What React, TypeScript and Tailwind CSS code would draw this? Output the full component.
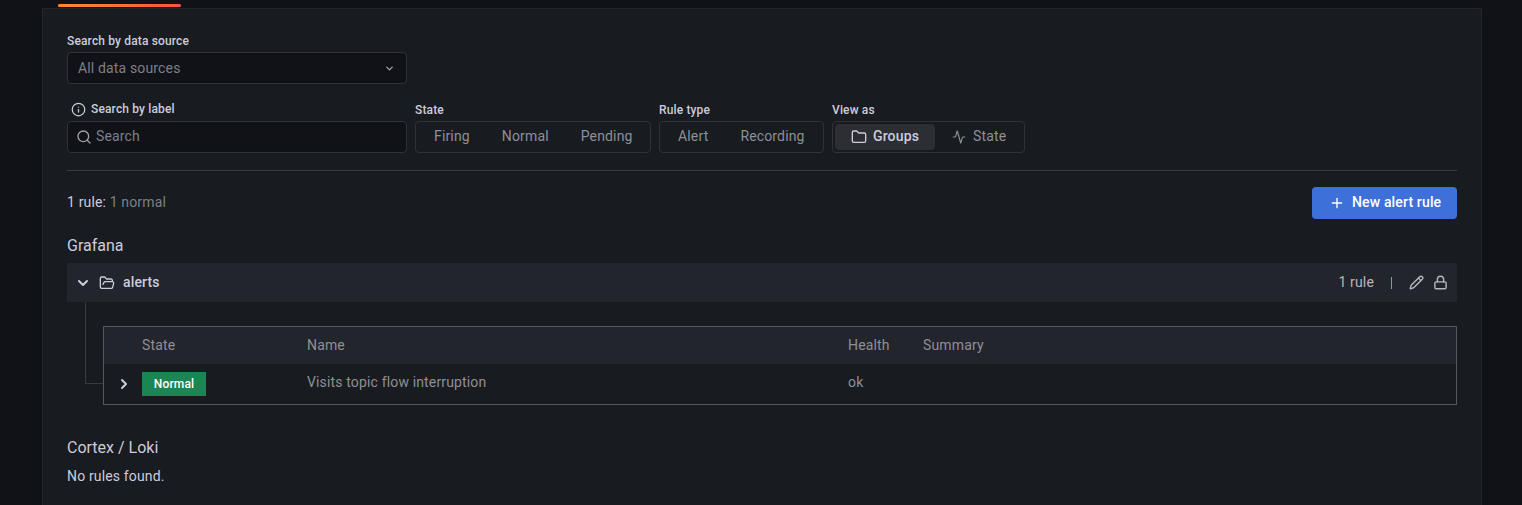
import React from "react"
import { ChevronDown, ChevronRight, Folder, FolderOpen, Info, Lock, Pencil, Plus, Search, Activity } from "lucide-react"

type SegmentProps = {
  options: string[]
  className: string
}

function Label({ children }: { children: React.ReactNode }): React.JSX.Element {
  return <div className="mb-1 flex h-[15px] items-center pt-[2px] text-xs leading-[15px] font-medium text-[#ccccdc]">{children}</div>
}

function Segment({ options, className }: SegmentProps): React.JSX.Element {
  return (
    <div className={`flex h-8 items-center rounded-sm border border-[#2f3237] pb-[2px] pl-[2px] ${className}`}>
      {options.map((option) => (
        <span key={option} className="px-4 text-sm text-[#8e8f98]">
          {option}
        </span>
      ))}
    </div>
  )
}

export default function App(): React.JSX.Element {
  return (
    <div className="h-[505px] overflow-hidden bg-[#111217] px-[42px] font-['Roboto',sans-serif] text-sm tracking-[0.15px] text-[#ccccdc]">
      <div className="h-2 pt-1 pl-4">
        <div className="h-[3px] w-[123px] rounded-sm bg-gradient-to-r from-[#ff8a33] to-[#f2553c]" />
      </div>

      <div className="h-[600px] w-[1440px] border border-[#22252a] bg-[#181b1f] px-6 pt-6">
        {/* FILTERS */}
        <Label>Search by data source</Label>
        <div className="flex h-8 w-[340px] items-center justify-between rounded-sm border border-[#2f3237] bg-[#111217] pr-[11px] pl-[10px]">
          <span className="text-sm text-[#7e7f88]">All data sources</span>
          <ChevronDown size={11} strokeWidth={2.5} className="text-[#b0b1b8]" />
        </div>

        <div className="mt-[18px] flex gap-2">
          <div className="w-[340px]">
            <div className="mb-1 flex h-[15px] items-center text-xs leading-[15px] font-medium text-[#ccccdc]">
              <Info size={15} className="mr-[5px] ml-[4px] text-[#ccccdc]" />
              Search by label
            </div>
            <div className="flex h-8 items-center rounded-sm border border-[#2f3237] bg-[#111217] pb-[2px] pl-2">
              <Search size={16} className="mr-[4px] translate-y-px text-[#a0a1a8]" />
              <span className="text-sm text-[#7e7f88]">Search</span>
            </div>
          </div>
          <div>
            <Label>State</Label>
            <Segment options={["Firing", "Normal", "Pending"]} className="w-[236px]" />
          </div>
          <div>
            <Label>Rule type</Label>
            <Segment options={["Alert", "Recording"]} className="w-[165px]" />
          </div>
          <div>
            <Label>View as</Label>
            <div className="flex h-8 w-[193px] items-center rounded-sm border border-[#2f3237] px-[2px]">
              <span className="flex h-[26px] w-[100px] items-center gap-[6px] rounded-sm bg-[#2c2e33] pb-[2px] pl-4 text-sm font-medium text-[#ccccdc]">
                <Folder size={16} className="translate-y-px" />
                Groups
              </span>
              <span className="flex items-center gap-[7px] pb-[2px] pl-[17px] text-sm text-[#8e8f98]">
                <Activity size={14} className="translate-y-px" />
                State
              </span>
            </div>
          </div>
        </div>

        <div className="mt-[17px] h-px bg-[#393b40]" />

        {/* SUMMARY */}
        <div className="mt-4 flex h-8 items-center justify-between">
          <div className="pb-[2px] text-sm">
            1 rule: <span className="text-[#7e7f88]">1 normal</span>
          </div>
          <button className="flex h-8 w-[145px] items-center rounded-sm bg-[#3d71d9] pb-[2px] pl-[17px] text-sm font-medium text-white">
            <Plus size={16} className="mr-[7px] translate-y-px" />
            New alert rule
          </button>
        </div>

        {/* GRAFANA */}
        <h2 className="mt-[17px] h-5 text-base leading-5 font-normal tracking-normal text-[#ccccdc]">Grafana</h2>
        <div className="mt-[7px] flex h-[39px] items-center justify-between bg-[#22252b] pr-[9px] pl-2">
          <div className="flex items-center">
            <ChevronDown size={16} strokeWidth={3} className="text-[#ccccdc]" />
            <FolderOpen size={16} className="ml-[8px] text-[#ccccdc]" />
            <span className="ml-[8px] -translate-y-px font-medium">alerts</span>
          </div>
          <div className="flex items-center text-[#b6b7be]">
            <span className="-translate-y-px">1 rule</span>
            <span className="mr-[17px] ml-[17px] h-3 w-px bg-[#6f9ad8]" />
            <Pencil size={15} strokeWidth={2.25} />
            <Lock size={15} strokeWidth={2.25} className="ml-[9px]" />
          </div>
        </div>

        <div className="flex">
          <div className="ml-[18px] h-[82px] w-[18px] flex-none border-b border-l border-[#393b40]" />
          <div className="mt-6 flex-1 border border-[#55575c]">
            <div className="flex h-[37px] items-center bg-[#22252b] pb-[2px] text-[#8e8f98]">
              <span className="w-[203px] pl-[38px]">State</span>
              <span className="w-[541px]">Name</span>
              <span className="w-[75px]">Health</span>
              <span>Summary</span>
            </div>
            <div className="flex h-10 items-center text-[#8e8f98]">
              <span className="flex w-[38px] justify-center pl-[3px]">
                <ChevronRight size={16} strokeWidth={3} className="-translate-x-px text-[#ccccdc]" />
              </span>
              <span className="flex h-6 w-[165px] items-center">
                <span className="flex h-6 w-16 items-center justify-center bg-[#1b8553] text-xs font-medium text-white">Normal</span>
              </span>
              <span className="w-[541px] -translate-y-[2px]">Visits topic flow interruption</span>
              <span className="-translate-y-[2px]">ok</span>
            </div>
          </div>
        </div>

        {/* CORTEX */}
        <h2 className="mt-[33px] h-5 text-base leading-5 font-normal tracking-normal text-[#ccccdc]">Cortex / Loki</h2>
        <p className="mt-[8px] text-sm leading-5">No rules found.</p>
      </div>
    </div>
  )
}
